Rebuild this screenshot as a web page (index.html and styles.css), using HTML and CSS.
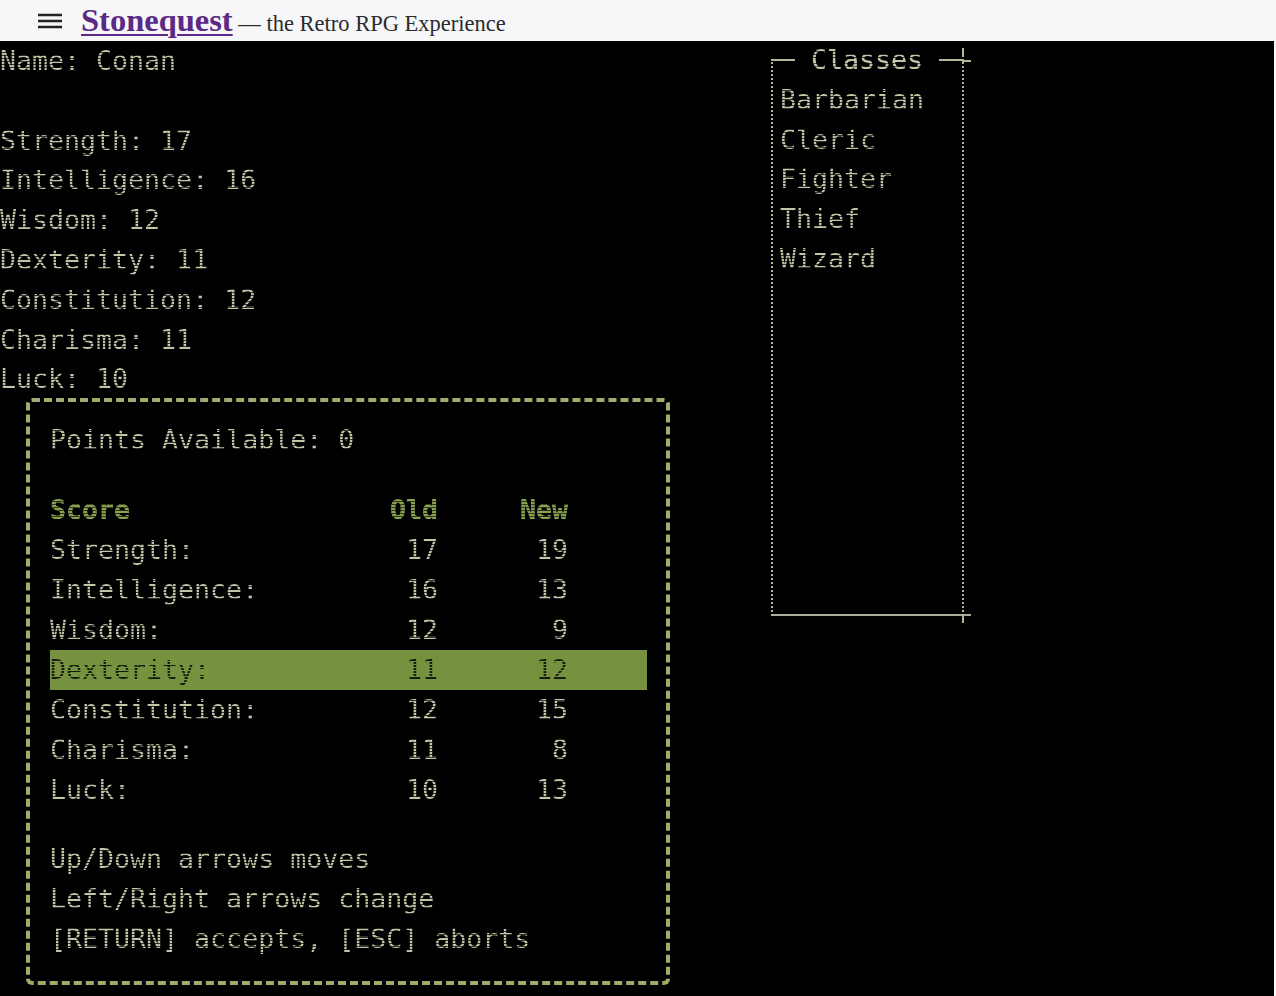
FILE: index.html
```html
<!DOCTYPE html>
<html lang="en">
<head>
  <meta charset="UTF-8">
  <meta name="viewport" content="width=device-width, initial-scale=1.0">
  <title>Stonequest</title>
  <link rel="stylesheet" href="styles.css">
</head>
<body>
  <header class="topbar">
    <button class="menu" aria-label="Menu">
      <svg width="24" height="24" viewBox="0 0 24 24"><path d="M0 6h24M0 12h24M0 18h24" stroke="#222" stroke-width="2.6"/></svg>
    </button>
    <h1 class="brand"><a href="#">Stonequest</a> <span class="tagline">&mdash; the Retro RPG Experience</span></h1>
  </header>

  <main class="term">
    <section class="sheet scan">
      <div class="line">Name: Conan</div>
      <div class="line">&nbsp;</div>
      <div class="line">Strength: 17</div>
      <div class="line">Intelligence: 16</div>
      <div class="line">Wisdom: 12</div>
      <div class="line">Dexterity: 11</div>
      <div class="line">Constitution: 12</div>
      <div class="line">Charisma: 11</div>
      <div class="line">Luck: 10</div>

      <div class="points-box">
        <div class="line">Points Available: 0</div>
        <div class="stats">
          <div class="row head"><span>Score</span><span class="num">Old</span><span class="num">New</span></div>
          <div class="row"><span>Strength:</span><span class="num">17</span><span class="num">19</span></div>
          <div class="row"><span>Intelligence:</span><span class="num">16</span><span class="num">13</span></div>
          <div class="row"><span>Wisdom:</span><span class="num">12</span><span class="num">9</span></div>
          <div class="row active"><span>Dexterity:</span><span class="num">11</span><span class="num">12</span></div>
          <div class="row"><span>Constitution:</span><span class="num">12</span><span class="num">15</span></div>
          <div class="row"><span>Charisma:</span><span class="num">11</span><span class="num">8</span></div>
          <div class="row"><span>Luck:</span><span class="num">10</span><span class="num">13</span></div>
        </div>
        <div class="help">
          <div class="line">Up/Down arrows moves</div>
          <div class="line">Left/Right arrows change</div>
          <div class="line">[RETURN] accepts, [ESC] aborts</div>
        </div>
      </div>
    </section>

    <fieldset class="classes scan">
      <legend class="scan">Classes</legend>
      <div class="line">Barbarian</div>
      <div class="line">Cleric</div>
      <div class="line">Fighter</div>
      <div class="line">Thief</div>
      <div class="line">Wizard</div>
    </fieldset>
  </main>
</body>
</html>
```

FILE: styles.css
```css
body {
  margin: 0;
  background: #f7f7f9;
  font-family: "Liberation Serif", serif;
}

/* top bar */
.topbar {
  height: 41px;
  display: flex;
  align-items: center;
  gap: 19px;
  padding-left: 38px;
  background: #f7f7f9;
}
.menu {
  border: none;
  background: none;
  padding: 0;
  display: flex;
  cursor: pointer;
}
.brand {
  margin: 0;
  font-size: 22.5px;
  font-weight: normal;
  color: #2b2b2b;
  white-space: nowrap;
}
.brand a {
  font-size: 32.5px;
  font-weight: bold;
  color: #5b2a86; /* purple title */
  text-decoration-thickness: 2px;
  text-underline-offset: 3px;
}

/* terminal screen */
.term {
  display: flex;
  align-items: flex-start;
  height: 955px;
  margin-right: 2px;
  background: #000;
  font-family: "DejaVu Sans Mono", monospace;
  font-size: 26.6px;
  line-height: 39.8px;
  overflow: hidden;
}

/* phosphor text with scanlines */
.scan {
  background-image: repeating-linear-gradient(#c3c6a6 0 2px, rgba(195, 198, 166, 0.28) 2px 3px);
  -webkit-background-clip: text;
  background-clip: text;
  color: transparent;
}

.line {
  white-space: pre;
}

.sheet {
  width: 771px;
  flex-shrink: 0;
}

/* allocation dialog */
.points-box {
  box-sizing: border-box;
  width: 644px;
  margin: -1px 0 0 26px;
  padding: 18px 19px 23px 20px;
  border: 4px dashed #a3aa6a;
  border-radius: 6px;
}
.stats {
  margin-top: 30px;
}
.row {
  display: grid;
  grid-template-columns: 340px 48px 130px 1fr;
  height: 40px;
  line-height: 40px;
  white-space: pre;
}
.row .num {
  text-align: right;
}
.row.head span {
  font-weight: bold;
  background-image: repeating-linear-gradient(#86a24b 0 2px, #2c3617 2px 3px);
  -webkit-background-clip: text;
  background-clip: text;
}
.row.active {
  background: #77923f; /* selected score */
}
.row.active span {
  background-image: repeating-linear-gradient(#161c0c 0 2px, transparent 2px 3px);
  -webkit-background-clip: text;
  background-clip: text;
}
.help {
  margin-top: 29px;
}

/* class list frame */
.classes {
  position: relative;
  box-sizing: border-box;
  width: 193px;
  height: 576px;
  margin: -1px 0 0;
  padding: 0 0 0 7px;
  border: 2px dotted #b3b795;
  border-top-style: solid;
  border-bottom-style: solid;
  border-bottom-color: #a9aa9a;
  min-width: 0;
}
.classes legend {
  margin-left: 15px;
  padding: 0 16px;
  line-height: 39.8px;
}
/* frame corners cross past the right edge */
.classes::before {
  content: "";
  position: absolute;
  right: -9px;
  top: -20px;
  width: 9px;
  height: 2px;
  background: #b3b795;
  box-shadow: 0 554px 0 #a9aa9a;
}
.classes::after {
  content: "";
  position: absolute;
  right: -2px;
  top: 100%;
  width: 2px;
  height: 9px;
  background: #b3b795;
  box-shadow: 0 -566px 0 #b3b795;
}
```
